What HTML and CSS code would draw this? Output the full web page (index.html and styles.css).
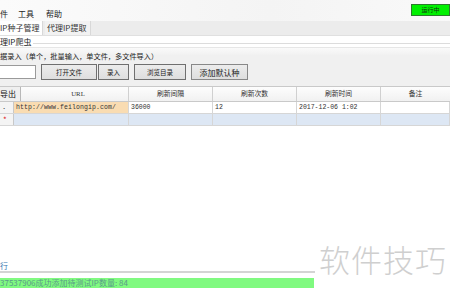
FILE: index.html
```html
<!DOCTYPE html>
<html lang="zh-CN">
<head>
  <meta charset="UTF-8" />
  <title>代理IP爬虫</title>
  <link rel="stylesheet" href="styles.css">
</head>
<body>
  <div class="janela">
    <div class="menubar">
      <span class="menu">件</span>
      <span class="menu">工具</span>
      <span class="menu">帮助</span>
      <span class="status">运行中</span>
    </div>

    <div class="abas">
      <div class="aba ativa">IP种子管理</div>
      <div class="aba">代理IP提取</div>
    </div>

    <div class="grupo-titulo">
      <span>理IP爬虫</span>
      <div class="linha"></div>
    </div>

    <div class="painel">
      <div class="dica">据录入（单个，批量输入，单文件，多文件导入）</div>
      <div class="acoes">
        <div class="entrada"></div>
        <button class="btn b1">打开文件</button>
        <button class="btn b2">录入</button>
        <button class="btn b3">浏览目录</button>
        <button class="btn b4">添加默认种</button>
      </div>
    </div>

    <div class="grade">
      <div class="cab">
        <div class="canto">导出</div>
        <div class="col c-url">URL</div>
        <div class="col c-n">刷新间隔</div>
        <div class="col c-n">刷新次数</div>
        <div class="col c-n">刷新时间</div>
        <div class="col c-obs">备注</div>
      </div>
      <div class="lin">
        <div class="rh">.</div>
        <div class="cel c-url url">http://www.feilongip.com/</div>
        <div class="cel c-n">36000</div>
        <div class="cel c-n">12</div>
        <div class="cel c-n">2017-12-06 1:02</div>
        <div class="cel c-obs"></div>
      </div>
      <div class="lin nova">
        <div class="rh estrela">*</div>
        <div class="cel c-url"></div>
        <div class="cel c-n"></div>
        <div class="cel c-n"></div>
        <div class="cel c-n"></div>
        <div class="cel c-obs"></div>
      </div>
    </div>

    <div class="vazio"></div>

    <div class="rodape">
      <div class="rotulo">行</div>
      <div class="separador"></div>
      <div class="log">37537906成功添加待测试IP数量: 84</div>
    </div>

    <div class="marca">软件技巧</div>
  </div>
</body>
</html>
```

FILE: styles.css
```css
body {
  margin: 0;
  background: #fff;
  font-family: "Noto Sans CJK SC", "Liberation Sans", sans-serif;
  color: #222;
}

.janela {
  position: relative;
  width: 450px;
  height: 293px;
  overflow: hidden;
  display: flex;
  flex-direction: column;
}

.menubar {
  height: 21px;
  display: flex;
  align-items: center;
  padding-top: 5px;
  box-sizing: border-box;
  background: linear-gradient(90deg, #fbfbfb, #f4f4f4 60%, #f9f9f9);
  font-size: 8px;
}

.menu {
  width: 16px;
  margin-right: 12px;
}

.menu:first-child {
  width: 8px;
  margin-right: 10px;
}

.status {
  margin-left: auto;
  width: 39px;
  height: 12px;
  box-sizing: border-box;
  background: #00f000;
  border: 1px solid #2d7a2d;
  font-size: 6px;
  text-align: center;
  line-height: 10px;
  color: #103010;
  margin-top: -6px;
}

.abas {
  height: 14px;
  display: flex;
  background: #ececec;
  border-bottom: 1px solid #e0e0e0;
  font-size: 8px;
}

.aba {
  padding: 0 2px;
  line-height: 14px;
  width: 41px;
  color: #333;
  background: #f2f2f2;
  border-right: 1px solid #d8d8d8;
  margin-left: 2px;
}

.aba.ativa {
  background: #fff;
  margin-left: 0;
  width: 40px;
  padding-left: 0;
}

.grupo-titulo {
  height: 11px;
  display: flex;
  align-items: center;
  gap: 2px;
  font-size: 8px;
  background: #fff;
  color: #222;
}

.grupo-titulo .linha {
  flex: 1;
  height: 1px;
  background: #dcdcdc;
  margin-top: 3px;
}

.painel {
  height: 39px;
  background: linear-gradient(#fafafa, #f0f0f0 20%);
  border-top: 1px solid #e6e6e6;
  box-sizing: border-box;
  padding-top: 4px;
}

.dica {
  font-size: 7.2px;
  line-height: 8px;
  color: #222;
  height: 8px;
  white-space: nowrap;
}

.acoes {
  display: flex;
  align-items: center;
  margin-top: 4px;
}

.entrada {
  width: 36px;
  height: 14px;
  box-sizing: border-box;
  background: #fff;
  border: 1px solid #9a9a9a;
  border-left: none;
  margin-right: 5px;
}

.btn {
  height: 16px;
  box-sizing: border-box;
  padding: 0;
  background: linear-gradient(#ececec, #dedede);
  border: 1px solid #6f6f6f;
  font-family: "Noto Sans CJK SC", sans-serif;
  font-size: 6.5px;
  color: #222;
}

.b1 { width: 56px; }
.b2 { width: 31px; margin-left: 1px; }
.b3 { width: 52px; margin-left: 5px; }
.b4 { width: 57px; margin-left: 5px; font-size: 8px; border-color: #888; }

.grade {
  font-size: 6.8px;
  color: #333;
}

.cab {
  display: flex;
  height: 14px;
  background: linear-gradient(#fdfdfd, #f1f1f1);
  border-top: 1px solid #c9c9c9;
  border-bottom: 1px solid #c9c9c9;
}

.canto {
  width: 21px;
  margin-right: -7px;
  position: relative;
  z-index: 1;
  box-sizing: border-box;
  font-size: 8px;
  line-height: 13px;
  background: #f0f0f0;
  border-right: 1px solid #b8b8b8;
  color: #111;
}

.col {
  box-sizing: border-box;
  text-align: center;
  line-height: 13px;
  border-right: 1px solid #d0d0d0;
}

.c-url { width: 115px; }
.c-n { width: 84px; }
.c-obs { flex: 1; border-right: none; }

.cab .c-url {
  font-family: "Liberation Serif", serif;
  padding-left: 14px;
}

.lin {
  display: flex;
  height: 11px;
  border-bottom: 1px solid #d6d6d6;
}

.rh {
  width: 14px;
  box-sizing: border-box;
  background: #f4f4f4;
  border-right: 1px solid #c8c8c8;
  line-height: 8px;
  padding-left: 3px;
  font-size: 8px;
}

.estrela {
  color: #e02020;
  line-height: 12px;
}

.cel {
  box-sizing: border-box;
  border-right: 1px solid #d6d6d6;
  line-height: 11px;
  padding-left: 2px;
  font-family: "Liberation Mono", monospace;
  font-size: 6.5px;
}

.url {
  background: #f9dcb2;
  letter-spacing: 0.1px;
}

.lin.nova .cel {
  background: #dde7f4;
}

.vazio {
  flex: 1;
  background: #fff;
}

.rodape {
  height: 36px;
  display: flex;
  flex-direction: column;
}

.rotulo {
  font-size: 8px;
  line-height: 10px;
  height: 14px;
  color: #3a78b0;
  padding-top: 4px;
  box-sizing: border-box;
}

.separador {
  width: 315px;
  height: 2px;
  background: #d4d4d4;
  margin-bottom: 5px;
}

.log {
  width: 314px;
  height: 10px;
  flex: none;
  background: #80fa80;
  color: #5a9a8a;
  font-size: 8px;
  line-height: 10px;
  white-space: nowrap;
  overflow: hidden;
}

.marca {
  position: absolute;
  left: 319px;
  top: 236px;
  font-size: 31px;
  letter-spacing: 1px;
  color: #cfcfcf;
  font-family: "Noto Sans CJK SC", sans-serif;
  font-weight: 300;
}
```
